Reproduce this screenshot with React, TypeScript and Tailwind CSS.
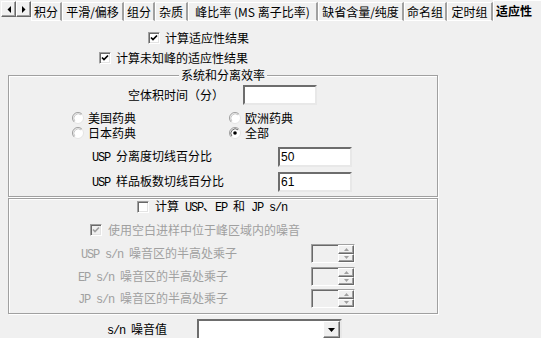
import React from 'react';

// Latin text in the dialog uses a narrow monospace face
const M: React.FC<{ children: React.ReactNode }> = ({ children }) => (
  <span className="font-['Liberation_Mono',monospace] text-[12px] tracking-[-1.2px] whitespace-pre">{children}</span>
);

const CheckBox: React.FC<{ checked?: boolean; disabled?: boolean }> = ({ checked, disabled }) => (
  <span
    className={`w-[12px] h-[12px] shrink-0 flex items-center justify-center border border-t-[#a0a0a0] border-l-[#a0a0a0] border-r-white border-b-white shadow-[inset_1px_1px_0_#696969,inset_-1px_-1px_0_#e3e3e3] ${
      disabled ? 'bg-[#f0f0f0]' : 'bg-white'
    }`}
  >
    {checked && (
      <svg width="8" height="8" viewBox="0 0 8 8">
        <path d="M1 3.5 L3 5.5 L7 1.5" fill="none" stroke={disabled ? '#a0a0a0' : '#000'} strokeWidth="1.7" />
      </svg>
    )}
  </span>
);

const Radio: React.FC<{ checked?: boolean }> = ({ checked }) => (
  <svg width="12" height="12" viewBox="0 0 12 12" className="shrink-0">
    <circle cx="6" cy="6" r="5.5" fill="#fff" stroke="#e3e3e3" />
    <path d="M2.1 9.9 A5.5 5.5 0 0 1 9.9 2.1" fill="none" stroke="#a0a0a0" />
    <path d="M2.9 9.1 A4.4 4.4 0 0 1 9.1 2.9" fill="none" stroke={checked ? '#696969' : '#c8c8c8'} />
    {checked && <circle cx="6" cy="6" r="1.8" fill="#000" />}
  </svg>
);

const Input: React.FC<{ value?: string }> = ({ value }) => (
  <div className="w-[74px] h-[20px] bg-white border-2 border-t-[#6d6d6d] border-l-[#6d6d6d] border-r-[#e8e8e8] border-b-[#e8e8e8] flex items-center pl-[1px] font-['Liberation_Sans',sans-serif] text-[12px]">
    {value}
  </div>
);

const Spinner: React.FC = () => (
  <div className="w-[44px] h-[19px] flex border border-t-[#a0a0a0] border-l-[#a0a0a0] border-r-white border-b-white shadow-[inset_1px_1px_0_#696969]">
    <div className="flex-1" />
    <div className="w-[16px] flex flex-col">
      {[0, 1].map((i) => (
        <div
          key={i}
          className="flex-1 flex items-center justify-center bg-[#f0f0f0] border border-t-white border-l-white border-r-[#696969] border-b-[#696969] shadow-[inset_-1px_-1px_0_#a0a0a0]"
        >
          <svg width="5" height="3" viewBox="0 0 5 3">
            <path d={i === 0 ? 'M2.5 0 L5 3 L0 3 Z' : 'M0 0 L5 0 L2.5 3 Z'} fill="#a0a0a0" />
          </svg>
        </div>
      ))}
    </div>
  </div>
);

const ArrowBtn: React.FC<{ left?: boolean }> = ({ left }) => (
  <div className="w-[15px] h-[16px] shrink-0 flex items-center justify-center bg-[#f0f0f0] border border-t-white border-l-white border-r-[#696969] border-b-[#696969] shadow-[inset_-1px_-1px_0_#a0a0a0]">
    <svg width="4" height="7" viewBox="0 0 4 7">
      <path d={left ? 'M4 0 L4 7 L0.5 3.5 Z' : 'M0 0 L0 7 L3.5 3.5 Z'} fill="#000" />
    </svg>
  </div>
);

const tabs: [string, string][] = [
  ['积分', 'w-[31px]'],
  ['平滑/偏移', 'w-[62px]'],
  ['组分', 'w-[31px]'],
  ['杂质', 'w-[33px]'],
  ['峰比率 (MS 离子比率)', 'w-[130px]'],
  ['缺省含量/纯度', 'w-[86px]'],
  ['命名组', 'w-[43px]'],
  ['定时组', 'w-[46px]'],
];

const App: React.FC = () => {
  return (
    <div className="w-[541px] h-[338px] overflow-hidden bg-[#f0f0f0] text-black text-[12px] leading-[12px] font-['Noto_Sans_CJK_SC',sans-serif]">
      {/* Tab strip */}
      <div className="flex h-[21px]">
        <div className="w-[31px] shrink-0 flex pt-[1px] pl-[1px]">
          <ArrowBtn left />
          <ArrowBtn />
        </div>
        <div className="flex items-start">
          {tabs.map(([label, w]) => (
            <div
              key={label}
              className={`${w} shrink-0 h-[19px] mt-[2px] pt-[1px] flex items-center justify-center whitespace-nowrap border-t border-l border-b border-white border-r-2 border-r-[#a0a0a0]`}
            >
              {label}
            </div>
          ))}
          <div className="w-[52px] shrink-0 h-[21px] flex items-center pl-[2px] font-bold whitespace-nowrap border-t border-l border-white border-r-2 border-r-[#a0a0a0]">
            适应性
          </div>
        </div>
      </div>

      <div className="flex flex-col">
        <div className="mt-[11px] h-[12px] pl-[148px] flex items-center gap-[5px]">
          <CheckBox checked />
          <span>计算适应性结果</span>
        </div>
        <div className="mt-[8px] h-[12px] pl-[99px] flex items-center gap-[5px]">
          <CheckBox checked />
          <span>计算未知峰的适应性结果</span>
        </div>

        {/* 系统和分离效率 */}
        <div className="relative mt-[11px] ml-[8px] w-[430px] h-[122px] border border-[#a0a0a0] shadow-[inset_1px_1px_0_#fff,1px_1px_0_#fff] flex flex-col">
          <div className="absolute left-0 right-0 -top-[7px] flex justify-center">
            <span className="bg-[#f0f0f0] px-[2px]">系统和分离效率</span>
          </div>
          <div className="mt-[9px] h-[20px] pl-[119px] flex items-center">
            <span className="w-[115px]">空体积时间（分）</span>
            <Input />
          </div>
          <div className="mt-[7px] h-[12px] pl-[63px] flex items-center">
            <div className="w-[157px] flex items-center gap-[4px]">
              <Radio />
              <span>美国药典</span>
            </div>
            <div className="flex items-center gap-[4px]">
              <Radio />
              <span>欧洲药典</span>
            </div>
          </div>
          <div className="mt-[3px] h-[12px] pl-[63px] flex items-center">
            <div className="w-[157px] flex items-center gap-[4px]">
              <Radio />
              <span>日本药典</span>
            </div>
            <div className="flex items-center gap-[4px]">
              <Radio checked />
              <span>全部</span>
            </div>
          </div>
          <div className="mt-[8px] h-[20px] pl-[83px] flex items-center">
            <span className="w-[186px]">
              <M>USP </M>分离度切线百分比
            </span>
            <Input value="50" />
          </div>
          <div className="mt-[5px] h-[20px] pl-[83px] flex items-center">
            <span className="w-[186px]">
              <M>USP </M>样品板数切线百分比
            </span>
            <Input value="61" />
          </div>
        </div>

        {/* s/n */}
        <div className="mt-[1px] ml-[8px] w-[430px] h-[116px] border border-[#a0a0a0] shadow-[inset_1px_1px_0_#fff,1px_1px_0_#fff] flex flex-col">
          <div className="mt-[2px] h-[12px] pl-[128px] flex items-center gap-[6px]">
            <CheckBox />
            <span>
              计算<M> USP</M>、<M>EP </M>和<M> JP s/n</M>
            </span>
          </div>
          <div className="mt-[11px] h-[12px] pl-[81px] flex items-center gap-[6px] text-[#a0a0a0]">
            <CheckBox checked disabled />
            <span>使用空白进样中位于峰区域内的噪音</span>
          </div>
          <div className="mt-[8px] h-[19px] pl-[72px] flex items-center text-[#a0a0a0]">
            <span className="w-[230px]">
              <M>USP s/n </M>噪音区的半高处乘子
            </span>
            <Spinner />
          </div>
          <div className="mt-[4px] h-[19px] pl-[69px] flex items-center text-[#a0a0a0]">
            <span className="w-[233px]">
              <M>EP s/n </M>噪音区的半高处乘子
            </span>
            <Spinner />
          </div>
          <div className="mt-[3px] h-[19px] pl-[69px] flex items-center text-[#a0a0a0]">
            <span className="w-[233px]">
              <M>JP s/n </M>噪音区的半高处乘子
            </span>
            <Spinner />
          </div>
        </div>

        <div className="mt-[5px] h-[21px] pl-[107px] flex items-center">
          <span className="w-[90px]">
            <M>s/n </M>噪音值
          </span>
          <div className="w-[145px] h-[21px] bg-white border-2 border-t-[#6d6d6d] border-l-[#6d6d6d] border-r-[#e8e8e8] border-b-[#e8e8e8] flex justify-end">
            <div className="w-[17px] h-full flex items-center justify-center bg-[#f0f0f0] border border-t-white border-l-white border-r-[#696969] border-b-[#696969] shadow-[inset_-1px_-1px_0_#a0a0a0]">
              <svg width="7" height="4" viewBox="0 0 7 4">
                <path d="M0 0 L7 0 L3.5 4 Z" fill="#000" />
              </svg>
            </div>
          </div>
        </div>
      </div>
    </div>
  );
};

export default App;
